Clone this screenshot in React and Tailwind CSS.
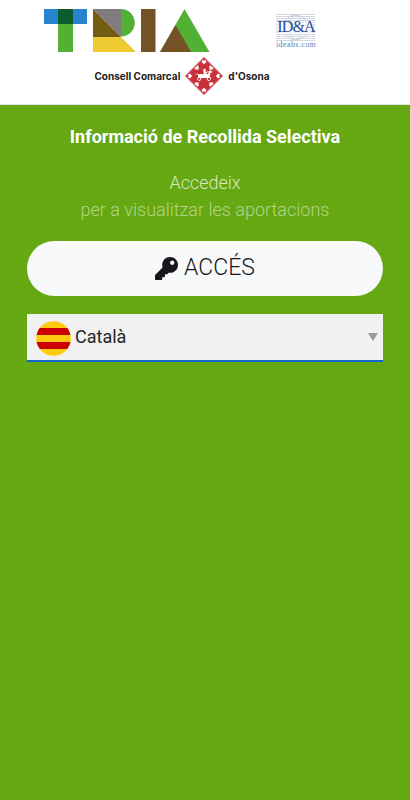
import React from 'react';
import { FaKey } from 'react-icons/fa';

const TriaLogo = () => (
  <svg viewBox="0 0 166 43" className="w-[166px] h-[43px]" role="img" aria-label="Tria">
    <path fill="#2683d0" d="M0 0h43v15H0z" />
    <path fill="#52b035" d="M14 0h15v43H14z" />
    <path fill="#0b5c2c" d="M14 0h15v15H14z" />
    <path fill="#7f7b7e" d="M49 0h28v28z" />
    <path fill="#735d15" d="M49 0l28 28H49z" />
    <path fill="#52b035" d="M77 0a13.7 13.7 0 0 1 0 27.4z" />
    <path fill="#edcb33" d="M49 28h28l15 15H49z" />
    <path fill="#755127" d="M97 0h14.500v43H97z" />
    <path fill="#52b035" d="M140.500 0L165.500 43H116z" />
    <path fill="#755127" d="M131.500 16L147 43h-31z" />
  </svg>
);

const IdeaLogo = () => (
  <div className="relative w-10 mt-[5px] font-['Liberation_Serif',serif] text-[#2549a0]">
    <svg viewBox="0 0 40 27" className="w-10 h-[27px]" aria-hidden="true">
      <path
        stroke="#d4d7df"
        strokeWidth="1"
        d="M0 .5h39M0 2.500h39M0 4.500h39M0 6.500h39M0 8.500h39M0 10.500h39M0 12.500h39M0 14.500h39M0 16.500h39M0 18.500h39M0 20.500h39M0 22.500h39M0 24.500h39M0 26.500h39"
      />
      <g fill="none" stroke="#c3cad9" strokeWidth=".8">
        <circle cx="19.500" cy="13.500" r="12.500" />
        <ellipse cx="19.500" cy="13.500" rx="6" ry="12.500" />
      </g>
      <path fill="#fff" opacity=".65" d="M2 7h35v13H2z" />
    </svg>
    <span className="absolute inset-x-0 top-[3px] text-center text-base leading-5 tracking-tighter">ID&amp;A</span>
    <span className="block text-center text-[8px] leading-[8px] tracking-wider text-[#5f79b5]">ideabs.com</span>
  </div>
);

const hearts = [
  [19, 5], [26, 11], [12, 11], [33, 19], [5, 19], [26, 27], [12, 27], [19, 33],
];

const OsonaShield = () => (
  <svg viewBox="0 0 38 38" className="w-[38px] h-[38px]" aria-hidden="true">
    <path fill="#c9303a" d="M19 0l19 19-19 19L0 19z" />
    <path fill="none" stroke="#dc7b7e" strokeWidth=".5" d="M19 1.500L36.500 19 19 36.500 1.500 19z" />
    {hearts.map(([x, y]) => (
      <path
        key={`${x}-${y}`}
        fill="#fff"
        transform={`translate(${x} ${y}) rotate(${(Math.atan2(y - 19, x - 19) * 180) / Math.PI + 90})`}
        d="M0 2.300L-2.300 0Q-2.500-1.900-1-1.900L0-1l1-.9Q2.500-1.900 2.300 0z"
      />
    ))}
    <g fill="#fff">
      <path d="M13 17.500q3-1 6 0l4-.5 1-3 1.500-.8 2 1.800-.6.8-1.400-.3-.5 3q-.5 2-2 2.500h-7q-2 .5-3-1z" />
      <circle cx="19.500" cy="13" r="1.300" />
      <path d="M18.500 14h2l1.200 3.500-1 2h-2z" />
    </g>
    <path
      fill="none"
      stroke="#fff"
      strokeWidth="1"
      d="M13.500 18q-2-2.500-2.500-.5M14.500 20l-2 1.500.5 2M16 20.500l-1 3h-1M22.500 20l3 .5v2M22 20.500l1 3h1.500M21 15.500l2.500-1"
    />
  </svg>
);

const CatalanFlag = () => (
  <svg viewBox="0 0 35 35" className="w-[35px] h-[35px]" aria-hidden="true">
    <clipPath id="flag-circle">
      <circle cx="17.500" cy="17.500" r="17.300" />
    </clipPath>
    <g clipPath="url(#flag-circle)">
      <path fill="#ffca10" d="M0 0h35v35H0z" />
      <path fill="#cc0000" d="M0 7h35v7H0zM0 21h35v7H0z" />
    </g>
  </svg>
);

const Header = () => (
  <header className="bg-white border-b border-[#e4e4e0] pt-[9px] pb-[9px] pr-[50px] flex flex-col items-center">
    <div className="flex items-start justify-between w-[272px] h-12">
      <TriaLogo />
      <IdeaLogo />
    </div>
    <div className="flex items-center justify-center gap-[5px] pl-1 font-[Inter,sans-serif] text-[10px] leading-4 font-bold text-[#222]">
      <span>Consell Comarcal</span>
      <OsonaShield />
      <span>d'Osona</span>
    </div>
  </header>
);

const LanguageSelect = () => (
  <div className="relative mt-[18px]">
    <select
      aria-label="Idioma"
      defaultValue="ca"
      className="block w-full h-12 appearance-none rounded-none border-b-2 border-[#0f68c8] bg-[#f1f1f1] pl-12 pr-6 text-lg text-[#212529] outline-none"
    >
      <option value="ca">Català</option>
    </select>
    <span className="absolute left-[9px] top-[7px] pointer-events-none">
      <CatalanFlag />
    </span>
    <svg viewBox="0 0 10 8" className="absolute right-[5px] top-[19px] w-[10px] h-2 pointer-events-none" aria-hidden="true">
      <path fill="#999" d="M0 0h10L5 8z" />
    </svg>
  </div>
);

const App = () => {
  return (
    <div className="min-h-screen bg-[#65a812] font-[Roboto,sans-serif]">
      <Header />
      <main className="px-[27px] pt-[18px] text-center">
        <h1 className="text-lg leading-7 font-bold text-white">Informació de Recollida Selectiva</h1>
        <p className="mt-[18px] text-lg leading-[27px] font-light text-white/75">Accedeix</p>
        <p className="text-lg leading-[27px] font-light text-white/50">per a visualitzar les aportacions</p>
        <button
          type="button"
          className="mt-[18px] flex w-full h-[55px] items-center justify-center gap-[6px] rounded-full bg-[#f8f9fa] text-[23px] font-light text-[#16181b]"
        >
          <FaKey />
          ACCÉS
        </button>
        <LanguageSelect />
      </main>
    </div>
  );
};

export default App;
